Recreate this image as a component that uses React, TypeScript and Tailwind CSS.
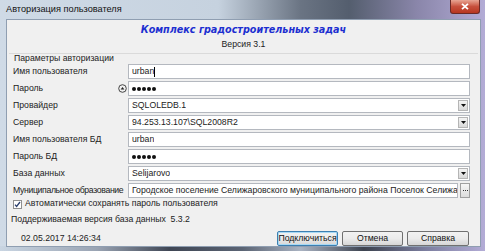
import React from 'react';

const font = { fontFamily: '"Liberation Sans", Tahoma, Arial, sans-serif' };

function ComboArrow() {
  return (
    <div className="absolute right-[1px] top-[1px] bottom-[1px] w-[10px] flex items-center justify-center bg-gradient-to-b from-[#f4f4f4] to-[#d9d9d9] border border-[#b5b5b5]">
      <svg width="5" height="3" viewBox="0 0 5 3"><path d="M0 0h5L2.5 3z" fill="#111" /></svg>
    </div>
  );
}

function Field({ value, combo, dots, caret }: { value: string; combo?: boolean; dots?: boolean; caret?: boolean }) {
  return (
    <div className="relative h-full flex-1 min-w-0 overflow-hidden bg-white border border-[#b4b8bf] flex items-center pl-[3px] text-[8.7px] text-[#222]">
      {dots ? (
        <span className="flex gap-[1px]">
          {[0, 1, 2, 3, 4].map((i) => (
            <span key={i} className="w-[4px] h-[4px] rounded-full bg-[#111]" />
          ))}
        </span>
      ) : (
        <span className="whitespace-nowrap overflow-hidden">{value}</span>
      )}
      {caret && <span className="w-px h-[10px] bg-black" />}
      {combo && <ComboArrow />}
    </div>
  );
}

function Row({ label, children, icon, tight }: { label: string; children: React.ReactNode; icon?: boolean; tight?: boolean }) {
  return (
    <div className="flex h-[15px] items-center">
      <div className={`w-[109px] shrink-0 text-[8.7px] text-[#222] whitespace-nowrap ${tight ? 'tracking-[-0.35px]' : ''}`}>{label}</div>
      <div className="w-[6px] shrink-0 flex items-center justify-center">
        {icon && (
          <svg width="9" height="9" viewBox="0 0 9 9" className="-ml-[6px] shrink-0">
            <circle cx="4.5" cy="4.5" r="3.8" fill="none" stroke="#333" strokeWidth="0.9" />
            <path d="M2.6 5.6h3.8L4.5 3z" fill="#222" />
          </svg>
        )}
      </div>
      <div className="flex-1 min-w-0 h-full flex">{children}</div>
    </div>
  );
}

function Btn({ label, focus }: { label: string; focus?: boolean }) {
  return (
    <div
      className={`h-[15px] flex items-center justify-center text-[8.7px] text-[#111] rounded-[2px] bg-gradient-to-b from-[#f2f2f2] via-[#ebebeb] to-[#d6d6d6] border ${focus ? 'border-[#3c7fb1] shadow-[inset_0_0_0_1px_#a7d8f4]' : 'border-[#707070]'}`}
    >
      {label}
    </div>
  );
}

export default function App() {
  return (
    <div style={font} className="relative w-[485px] h-[251px] overflow-hidden bg-[linear-gradient(90deg,#cfdae6_0%,#c6d2df_45%,#6a7483_62%,#545e6e_72%,#8a86aa_86%,#b3acd6_100%)]">
      {/* title bar */}
      <div className="h-[19px] flex items-center pl-[6px] text-[9.2px] text-[#111]">Авторизация пользователя</div>
      <div className="absolute right-[5px] top-0 w-[30px] h-[14px] rounded-b-[3px] border border-[#6b2a26] border-t-0 bg-gradient-to-b from-[#e8a594] via-[#c7503d] to-[#b7361f] flex items-center justify-center">
        <svg width="8" height="7" viewBox="0 0 8 7"><path d="M1 0.8l6 5.4M7 0.8l-6 5.4" stroke="#fff" strokeWidth="1.8" /></svg>
      </div>
      {/* bottom frame streak */}
      <div className="absolute left-0 right-0 bottom-0 h-[5px] bg-[linear-gradient(90deg,#c9d5e2_0%,#9aa4b3_20%,#3f4654_35%,#5b6474_50%,#aab3c2_62%,#3d4350_75%,#7d7fa0_88%,#b3acd6_100%)]" />
      {/* client area */}
      <div className="absolute left-[6px] top-[19px] w-[475px] h-[228px] bg-[#f0f0f0] border border-[#8f9eb1] flex flex-col">
        <div className="h-[22px] flex items-end justify-center">
          <span style={{ fontFamily: '"DejaVu Sans Condensed", "DejaVu Sans", Verdana, sans-serif' }} className="text-[10.7px] font-bold italic text-[#1d2fd0]">
            Комплекс градостроительных задач
          </span>
        </div>
        <div className="h-[13px] flex items-center justify-center text-[8.7px] text-[#222]">Версия 3.1</div>
        <div className="mx-[2px] mt-[2px] border-t border-[#dadada]" />
        <div className="pl-[7px] h-[9px] flex items-center text-[8.7px] text-[#222]">Параметры авторизации</div>
        <div className="pl-[6px] pr-[10px] mt-[1px] flex flex-col gap-[2px]">
          <Row label="Имя пользователя"><Field value="urban" caret /></Row>
          <Row label="Пароль" icon><Field value="" dots /></Row>
          <Row label="Провайдер"><Field value="SQLOLEDB.1" combo /></Row>
          <Row label="Сервер"><Field value="94.253.13.107\SQL2008R2" combo /></Row>
          <Row label="Имя пользователя БД"><Field value="urban" /></Row>
          <Row label="Пароль БД"><Field value="" dots /></Row>
          <Row label="База данных"><Field value="Selijarovo" combo /></Row>
          <Row label="Муниципальное образование" tight>
            <div className="flex-1 min-w-0 flex gap-[2px] h-full">
              <Field value="Городское поселение Селижаровского муниципального района Поселок Селижаровс" />
              <div className="w-[10px] shrink-0 h-full overflow-hidden border border-[#a0a0a0] bg-gradient-to-b from-[#f6f6f6] to-[#dcdcdc] flex items-center justify-center gap-[1px]">
                <span className="w-px h-px bg-[#333]" />
                <span className="w-px h-px bg-[#333]" />
                <span className="w-px h-px bg-[#333]" />
              </div>
            </div>
          </Row>
        </div>
        <div className="pl-[6px] h-[12px] flex items-center gap-[3px] text-[8.7px] text-[#222]">
          <div className="w-[9px] h-[9px] border border-[#8f8f8f] bg-white flex items-center justify-center">
            <svg width="7" height="7" viewBox="0 0 7 7"><path d="M1 3.6l1.6 1.8L6 1" fill="none" stroke="#2b3f6e" strokeWidth="1.3" /></svg>
          </div>
          Автоматически сохранять пароль пользователя
        </div>
        <div className="pl-[4px] mt-[3px] h-[13px] flex items-center text-[8.7px] text-[#222]">
          Поддерживаемая версия база данных&nbsp;&nbsp;5.3.2
        </div>
        <div className="mt-[5px] pl-[14px] pr-[11px] flex items-center justify-between">
          <span className="text-[8.7px] text-[#222]">02.05.2017 14:26:34</span>
          <div className="flex gap-[4px]">
            <div className="w-[61px]"><Btn label="Подключиться" focus /></div>
            <div className="w-[61px]"><Btn label="Отмена" /></div>
            <div className="w-[62px]"><Btn label="Справка" /></div>
          </div>
        </div>
      </div>
    </div>
  );
}
